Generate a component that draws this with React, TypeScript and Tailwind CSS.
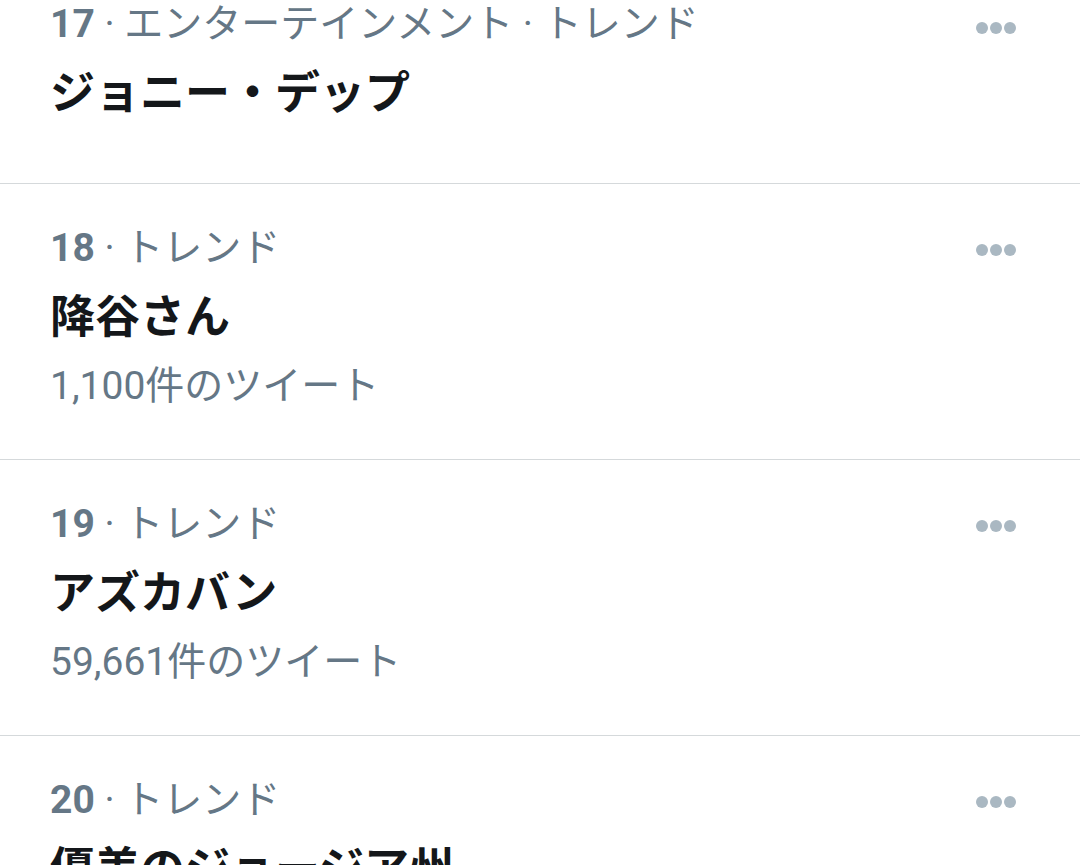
import React from "react";

type Trend = {
  rank: number;
  category: string;
  title: string;
  count?: string;
};

const trends: Trend[] = [
  { rank: 17, category: "エンターテインメント · トレンド", title: "ジョニー・デップ" },
  { rank: 18, category: "トレンド", title: "降谷さん", count: "1,100件のツイート" },
  { rank: 19, category: "トレンド", title: "アズカバン", count: "59,661件のツイート" },
  { rank: 20, category: "トレンド", title: "優美のジョージア州", count: "1,234件のツイート" },
];

function Dots() {
  return (
    <div className="flex gap-[2px]">
      <span className="block w-[12px] h-[12px] rounded-full bg-[#aab8c2]" />
      <span className="block w-[12px] h-[12px] rounded-full bg-[#aab8c2]" />
      <span className="block w-[12px] h-[12px] rounded-full bg-[#aab8c2]" />
    </div>
  );
}

function Row({ t }: { t: Trend }) {
  return (
    <div
      className={`relative pl-[50px] pr-[64px] pt-[40px] border-b border-[#d5d9db] ${
        t.count ? "pb-[49px]" : "pb-[61px]"
      }`}
    >
      <div className={`absolute right-[64px] ${t.count ? "top-[60px]" : "top-[62px]"}`}>
        <Dots />
      </div>
      <div className="text-[39px] leading-[48px] text-[#657786] whitespace-nowrap">
        <span className="font-bold">{t.rank}</span>
        <span> · {t.category}</span>
      </div>
      <div className="mt-[18px] text-[45px] leading-[56px] font-bold text-[#14171a] whitespace-nowrap">
        {t.title}
      </div>
      {t.count && (
        <div className="mt-[16px] text-[39px] leading-[48px] text-[#657786] whitespace-nowrap">
          {t.count}
        </div>
      )}
    </div>
  );
}

export default function App() {
  return (
    <div
      className="w-[1080px] h-[865px] overflow-hidden bg-white"
      style={{ fontFamily: "Roboto, 'Noto Sans CJK JP', sans-serif" }}
    >
      <div className="-mt-[40px]">
        {trends.map((t) => (
          <Row key={t.rank} t={t} />
        ))}
      </div>
    </div>
  );
}
